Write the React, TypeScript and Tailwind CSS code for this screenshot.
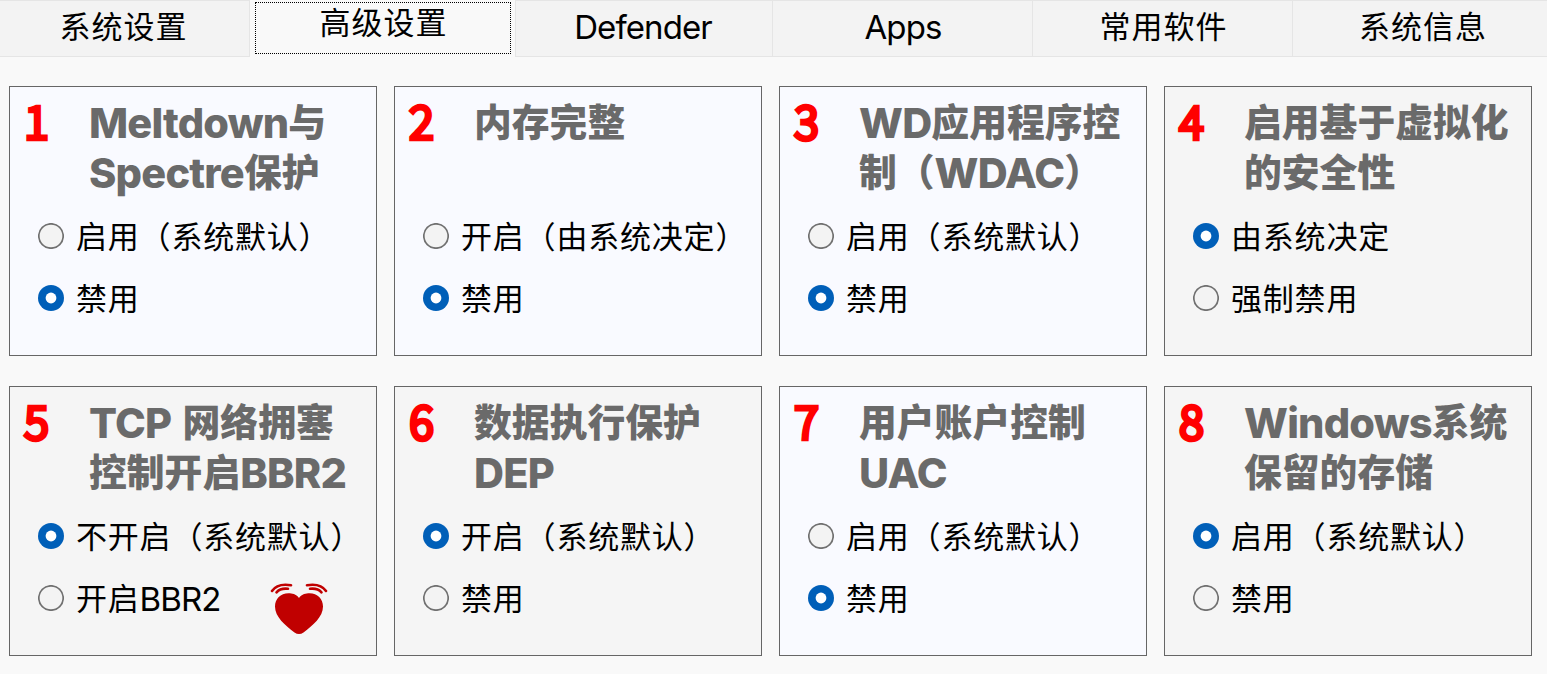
type Card = { title: string[]; options: string[]; selected: number; tint?: boolean; heart?: boolean };

const cards: Card[] = [
  { title: ['Meltdown与', 'Spectre保护'], options: ['启用（系统默认）', '禁用'], selected: 1, tint: true },
  { title: ['内存完整'], options: ['开启（由系统决定）', '禁用'], selected: 1, tint: true },
  { title: ['WD应用程序控', '制（WDAC）'], options: ['启用（系统默认）', '禁用'], selected: 1, tint: true },
  { title: ['启用基于虚拟化', '的安全性'], options: ['由系统决定', '强制禁用'], selected: 0 },
  { title: ['TCP 网络拥塞', '控制开启BBR2'], options: ['不开启（系统默认）', '开启BBR2'], selected: 0, heart: true },
  { title: ['数据执行保护', 'DEP'], options: ['开启（系统默认）', '禁用'], selected: 0 },
  { title: ['用户账户控制', 'UAC'], options: ['启用（系统默认）', '禁用'], selected: 1, tint: true },
  { title: ['Windows系统', '保留的存储'], options: ['启用（系统默认）', '禁用'], selected: 0 },
];

const tabs = [
  { label: '系统设置', box: 'w-[250px] border-r pr-[2px]' },
  { label: '高级设置', box: 'w-[265px]' },
  { label: 'Defender', box: 'w-[257px] border-l pr-[2px]' },
  { label: 'Apps', box: 'w-[260px] border-l pl-[1px]' },
  { label: '常用软件', box: 'w-[260px] border-l pl-[2px]' },
  { label: '系统信息', box: 'w-[255px] border-l pl-[6px]' },
];

function Mixed({ text, latin }: { text: string; latin: string }) {
  return (
    <>
      {text.split(/([A-Za-z0-9 ]+)/).filter(Boolean).map((part, i) =>
        /^[A-Za-z0-9 ]/.test(part) ? (
          <span key={i} className={latin}>{part}</span>
        ) : (
          <span key={i}>{part}</span>
        )
      )}
    </>
  );
}

const bodyLatin = 'font-["Inter","Noto_Sans_CJK_SC",sans-serif] text-[33px] leading-none tracking-[-0.9px] align-[-1px]';
const titleLatin = 'font-["Inter","Noto_Sans_CJK_SC",sans-serif] text-[41.500px] leading-none font-extrabold tracking-[-0.8px] align-[-2px] [word-spacing:3px]';

function Radio({ on }: { on: boolean }) {
  return (
    <svg className="size-[26px] shrink-0" viewBox="0 0 26 26">
      {on ? (
        <>
          <circle cx="13" cy="13" r="13" fill="#005fb8" />
          <circle cx="13" cy="13" r="5.4" fill="#fff" />
        </>
      ) : (
        <circle cx="13" cy="13" r="12.200" fill="#f3f3f3" stroke="#707070" strokeWidth="1.700" />
      )}
    </svg>
  );
}

function Heart() {
  return (
    <svg className="h-[52px] w-[58px]" viewBox="0 0 58 52">
      <path
        d="M29 15C26 11 22 10.300 18.500 10.300C10.500 10.300 5 16 5 23.500C5 34 15 42 24.500 49.500Q29 52.500 33.500 49.500C43 42 53 34 53 23.500C53 16 47.500 10.300 39.500 10.300C36 10.300 32 11 29 15Z"
        fill="#c00000"
      />
      <g fill="none" stroke="#c00000" strokeWidth="2.600" strokeLinecap="round">
        <path d="M2 8C6 2 13 .9 21 2.200" />
        <path d="M6.500 9.300C9.500 6 13 5.200 18 5.800" />
        <path d="M56 8C52 2 45 .9 37 2.200" />
        <path d="M51.500 9.300C48.500 6 45 5.200 40 5.800" />
      </g>
    </svg>
  );
}

export default function App() {
  return (
    <div className="h-[674px] w-[1547px] overflow-hidden bg-[#f9f9f9] font-['Noto_Sans_CJK_SC',sans-serif] text-black">
      <div className="flex h-[57px] text-[31px] tracking-[1px] whitespace-nowrap">
        {tabs.map((tab, i) =>
          i === 1 ? (
            <div key={i} className={`${tab.box} px-[5px] pr-[4px] pt-[2px]`}>
              <div className="flex h-[52px] items-center justify-center border border-dotted border-black pb-[14px] pl-px">{tab.label}</div>
            </div>
          ) : (
            <div key={i} className={`${tab.box} flex items-center justify-center border-y border-[#e5e5e5] bg-[#f3f3f3] pb-[7px]`}>
              <div className="leading-[48px]">
                <Mixed text={tab.label} latin={bodyLatin} />
              </div>
            </div>
          )
        )}
      </div>
      <div className="grid grid-cols-[repeat(4,368px)] gap-x-[17px] gap-y-[30px] pt-[29px] pl-[9px]">
        {cards.map((card, i) => (
          <div key={i} className={`flex h-[270px] flex-col border border-[#666666] ${card.tint ? 'bg-[#f9faff]' : 'bg-[#f5f5f5]'}`}>
            <div className="flex h-[118px] pt-[8px]">
              <div className="flex h-[50px] w-[53px] shrink-0 items-center justify-center text-[45px] leading-[50px] font-light text-[#ff0000] [-webkit-text-stroke:4.500px_#ff0000] [stroke-linejoin:round]">
                {i + 1}
              </div>
              <div className="ml-[26px] text-[37.800px] font-black whitespace-nowrap text-[#6a6a6a]">
                {card.title.map((line) => (
                  <div key={line} className="h-[50px] leading-[50px]">
                    <Mixed text={line} latin={titleLatin} />
                  </div>
                ))}
              </div>
            </div>
            {card.options.map((option, n) => (
              <div key={option} className="flex h-[62px] items-center pl-[28px]">
                <Radio on={card.selected === n} />
                <span className="mt-[-2px] ml-[12px] text-[31px] leading-[50px] tracking-[0.800px] whitespace-nowrap">
                  <Mixed text={option} latin={bodyLatin} />
                </span>
                {card.heart && n === 1 && (
                  <div className="mt-[21px] ml-[49px]">
                    <Heart />
                  </div>
                )}
              </div>
            ))}
          </div>
        ))}
      </div>
    </div>
  );
}
